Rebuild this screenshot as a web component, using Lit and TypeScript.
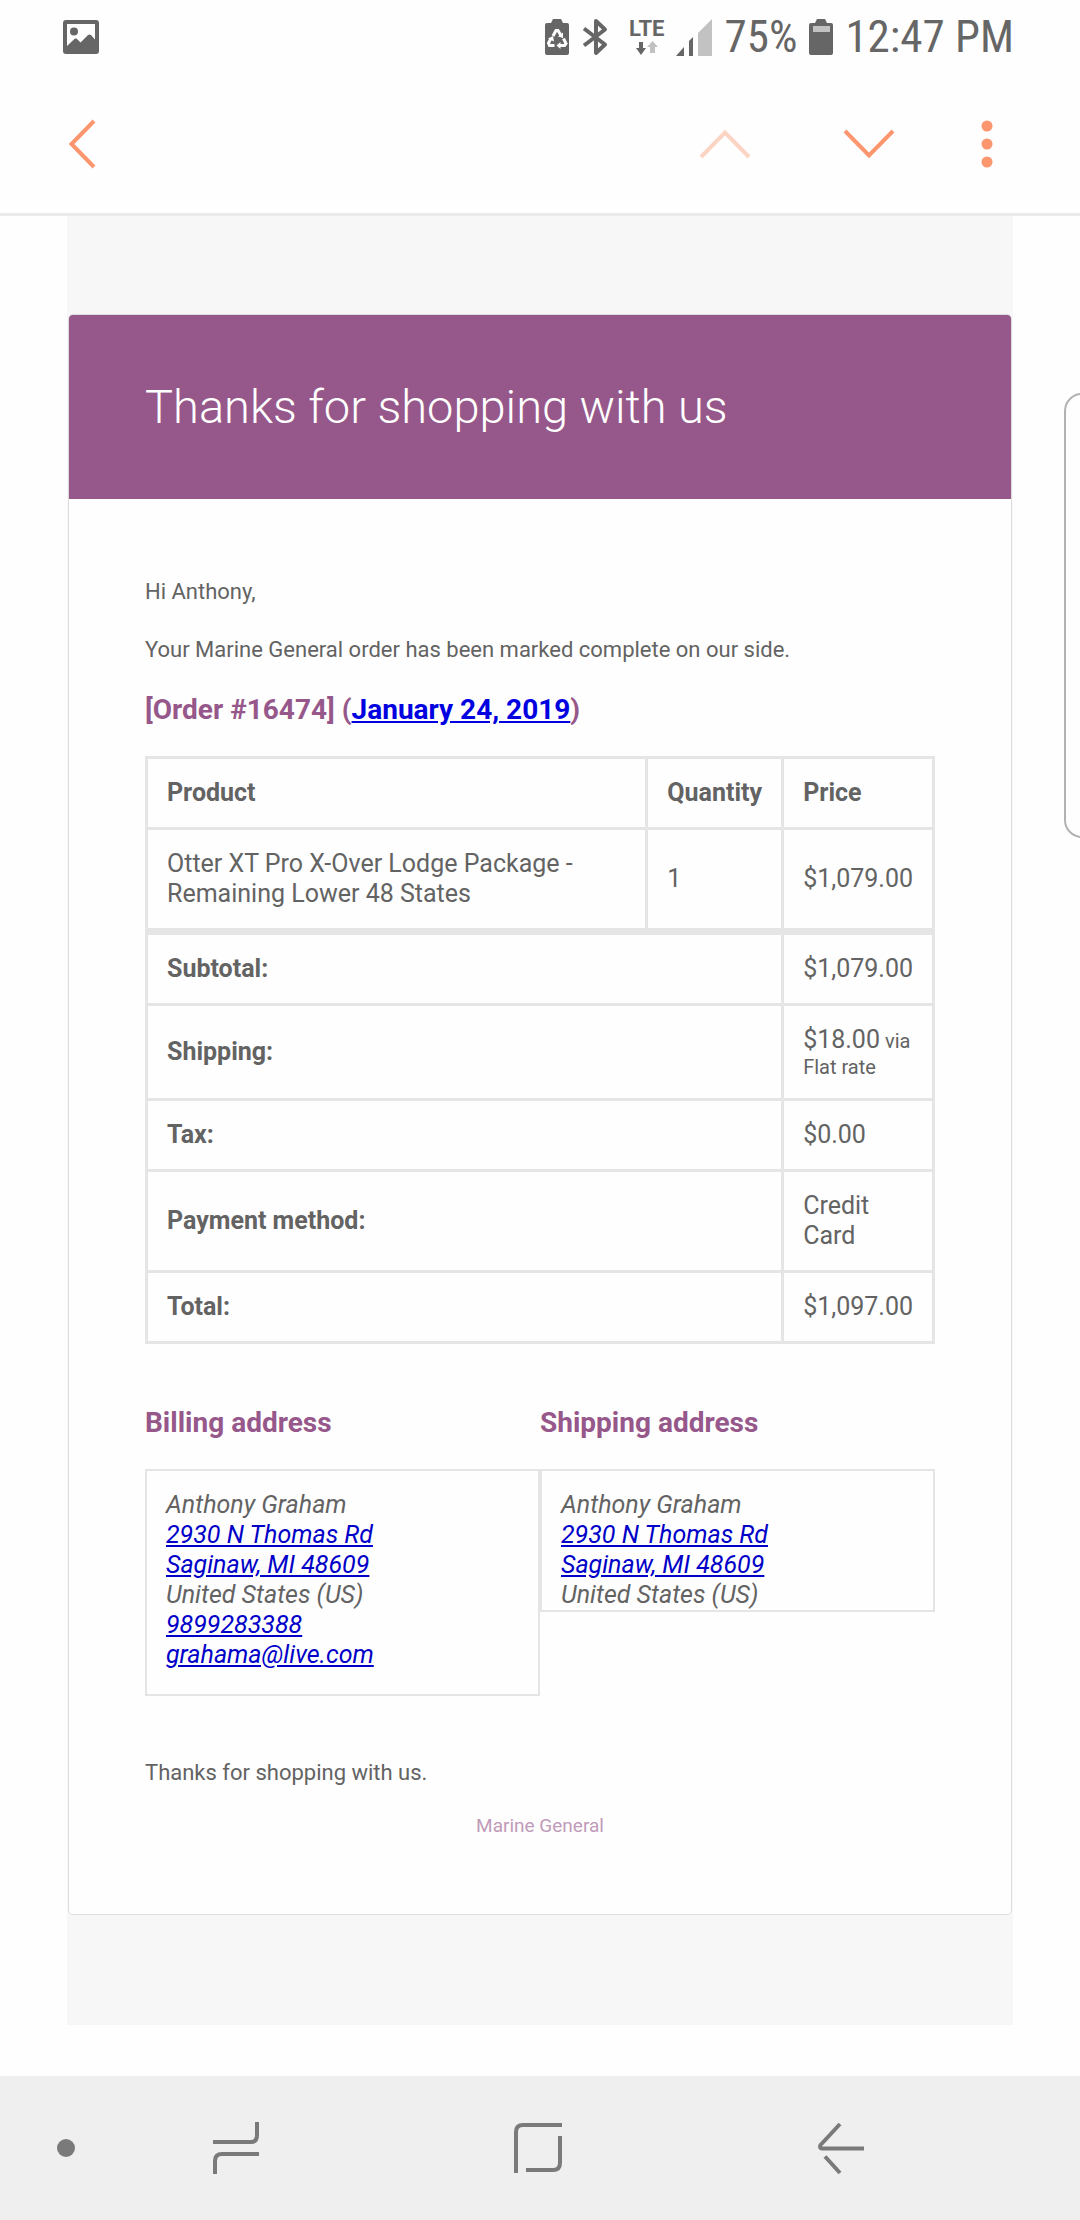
import { LitElement, css, html, svg, nothing } from "lit";
import { customElement, property } from "lit/decorators.js";

interface TotalRow {
  label: string;
  value: string;
  note?: string;
}

interface AddressLine {
  text: string;
  href?: string;
}

const TOTALS: TotalRow[] = [
  { label: "Subtotal:", value: "$1,079.00" },
  { label: "Shipping:", value: "$18.00", note: "via Flat rate" },
  { label: "Tax:", value: "$0.00" },
  { label: "Payment method:", value: "Credit Card" },
  { label: "Total:", value: "$1,097.00" },
];

const SHIPPING: AddressLine[] = [
  { text: "Anthony Graham" },
  { text: "2930 N Thomas Rd", href: "#map" },
  { text: "Saginaw, MI 48609", href: "#map" },
  { text: "United States (US)" },
];

const BILLING: AddressLine[] = [
  ...SHIPPING,
  { text: "9899283388", href: "tel:9899283388" },
  { text: "grahama@live.com", href: "mailto:grahama@live.com" },
];

@customElement("status-bar")
export class StatusBar extends LitElement {
  static styles = css`
    :host {
      display: flex;
      align-items: center;
      box-sizing: border-box;
      height: 74px;
      padding: 0 66px 0 63px;
      color: #666;
      font-family: "Roboto Condensed", Roboto, sans-serif;
    }
    svg {
      display: block;
      flex: none;
    }
    .right {
      display: flex;
      align-items: center;
      gap: 12px;
      margin-left: auto;
    }
    .text {
      font-size: 45px;
      line-height: 52px;
      white-space: nowrap;
    }
    .network {
      display: flex;
      flex-direction: column;
      align-items: center;
      gap: 2px;
      margin-left: 8px;
      font-family: Roboto, sans-serif;
      font-weight: 700;
      font-size: 22px;
      line-height: 20px;
    }
  `;

  render() {
    return html`
      <svg width="36" height="34" viewBox="0 0 36 34" aria-hidden="true">
        <path fill="#666" fill-rule="evenodd"
          d="M3 0H33Q36 0 36 3V31Q36 34 33 34H3Q0 34 0 31V3Q0 0 3 0ZM4 4V26L12 18.5 13.5 18.5 17.5 22.5 25 15Q26.500 14 28 15L32 19.500V4Z" />
        <circle cx="11" cy="11.500" r="4" fill="#666" />
      </svg>
      <div class="right">
        <svg width="24" height="36" viewBox="0 0 24 36" aria-hidden="true">
          <path fill="#666" d="M6 4L8 0H16L18 4H22Q24 4 24 6V34Q24 36 22 36H2Q0 36 0 34V6Q0 4 2 4Z" />
          <g fill="none" stroke="#fff" stroke-width="3">
            <path d="M8 17L11 11.500H13L16 16.500" />
            <path d="M18.500 19.500L21 24.500 19.500 26.500H14.500" />
            <path d="M9.500 26.500H4.500L3.500 24 6 19.500" />
          </g>
          <g fill="#fff">
            <path d="M18 13.500V19L13 17.500Z" />
            <path d="M15.500 23V30L11.500 26.500Z" />
            <path d="M3 19.500L8 17 9 22.500Z" />
          </g>
        </svg>
        <svg width="28" height="38" viewBox="0 0 28 38" aria-hidden="true">
          <path fill="none" stroke="#666" stroke-width="4" stroke-linejoin="round"
            d="M3 10.500L24 26.500 15 35V3L24 11.500 3 27.500" />
        </svg>
        <div class="network">
          <span>LTE</span>
          <svg width="22" height="14" viewBox="0 0 22 14" aria-hidden="true">
            <path fill="#666" d="M3 1H7V7H10L5 14 0 7H3Z" />
            <path fill="#c2c2c2" d="M14 12V6H11L16.500 0 22 6H19V12Z" />
          </svg>
        </div>
        <svg width="36" height="37" viewBox="0 0 36 37" aria-hidden="true">
          <path fill="#666" d="M0 37L8 28V37ZM13 37V22L17 18V37Z" />
          <path fill="#c2c2c2" d="M22 37V14L36 0V37Z" />
        </svg>
        <span class="text">75%</span>
        <svg width="24" height="36" viewBox="0 0 24 36" aria-hidden="true">
          <path fill="#666" d="M6 4L8 0H16L18 4H22Q24 4 24 6V34Q24 36 22 36H2Q0 36 0 34V6Q0 4 2 4Z" />
          <rect x="4" y="7" width="17" height="6" fill="#c2c2c2" />
        </svg>
        <span class="text">12:47 PM</span>
      </div>
    `;
  }
}

@customElement("mail-toolbar")
export class MailToolbar extends LitElement {
  static styles = css`
    :host {
      display: flex;
      align-items: center;
      box-sizing: border-box;
      height: 142px;
      padding: 0 67px 0 56px;
      border-bottom: 3px solid #ebebeb;
      color: #fb966e;
    }
    button {
      display: flex;
      align-items: center;
      justify-content: center;
      width: 72px;
      height: 72px;
      padding: 0;
      border: 0;
      background: none;
      color: inherit;
    }
    .back {
      width: 52px;
    }
    .more {
      width: 52px;
      margin-left: 56px;
    }
    .prev {
      margin-left: auto;
      opacity: 0.4;
    }
    .next {
      margin-left: 72px;
    }
    svg {
      display: block;
      fill: none;
      stroke: currentColor;
      stroke-width: 4;
    }
    .dots {
      fill: currentColor;
      stroke: none;
    }
  `;

  render() {
    return html`
      <button class="back" aria-label="Back">
        <svg width="28" height="50" viewBox="0 0 28 50"><path d="M26 2L3.500 25 26 48" /></svg>
      </button>
      <button class="prev" aria-label="Previous message" disabled>
        <svg width="52" height="30" viewBox="0 0 52 30"><path d="M2 28L26 3.500 50 28" /></svg>
      </button>
      <button class="next" aria-label="Next message">
        <svg width="52" height="30" viewBox="0 0 52 30"><path d="M2 2L26 26.500 50 2" /></svg>
      </button>
      <button class="more" aria-label="More options">
        <svg class="dots" width="12" height="50" viewBox="0 0 12 50">
          <circle cx="6" cy="7" r="5.500" /><circle cx="6" cy="25" r="5.500" /><circle cx="6" cy="43" r="5.500" />
        </svg>
      </button>
    `;
  }
}

@customElement("order-table")
export class OrderTable extends LitElement {
  static styles = css`
    :host {
      display: block;
    }
    table {
      width: 100%;
      border-collapse: collapse;
      font-size: 25px;
      line-height: 30px;
    }
    th,
    td {
      padding: 19px;
      border: 3px solid #e5e5e5;
      text-align: left;
      vertical-align: middle;
    }
    .narrow {
      width: 1%;
    }
    .first th,
    .first td {
      border-top-width: 7px;
    }
    .noted {
      font-size: 20px;
      line-height: 24px;
    }
    .amount {
      font-size: 25px;
      line-height: 30px;
    }
    .note {
      font-size: 20px;
    }
  `;

  render() {
    return html`
      <table>
        <thead>
          <tr>
            <th scope="col">Product</th>
            <th scope="col" class="narrow">Quantity</th>
            <th scope="col" class="narrow">Price</th>
          </tr>
        </thead>
        <tbody>
          <tr>
            <td>Otter XT Pro X-Over Lodge Package - Remaining Lower 48 States</td>
            <td>1</td>
            <td>$1,079.00</td>
          </tr>
        </tbody>
        <tfoot>
          ${TOTALS.map(
            (row, i) => html`
              <tr class=${i === 0 ? "first" : "rest"}>
                <th scope="row" colspan="2">${row.label}</th>
                <td class=${row.note ? "noted" : "plain"}>
                  <span class="amount">${row.value}</span>
                  ${row.note ? html`<small class="note">${row.note}</small>` : nothing}
                </td>
              </tr>
            `,
          )}
        </tfoot>
      </table>
    `;
  }
}

@customElement("address-card")
export class AddressCard extends LitElement {
  @property() heading = "";
  @property({ attribute: false }) lines: AddressLine[] = [];
  @property({ type: Boolean }) contact = false;

  static styles = css`
    :host {
      display: block;
      flex: 1;
    }
    h2 {
      margin: 0 0 28px;
      color: #96588a;
      font-size: 28px;
      line-height: 37px;
      font-weight: 700;
    }
    address {
      padding: 19px 19px 0;
      border: 2px solid #e5e5e5;
      font-size: 25px;
      line-height: 30px;
      font-style: italic;
    }
    .contact {
      padding-bottom: 24px;
    }
    .line {
      display: block;
    }
    a {
      color: #0000c8;
    }
  `;

  render() {
    return html`
      <h2>${this.heading}</h2>
      <address class=${this.contact ? "contact" : "plain"}>
        ${this.lines.map(
          (l) => html`<span class="line">${l.href ? html`<a href=${l.href}>${l.text}</a>` : l.text}</span>`,
        )}
      </address>
    `;
  }
}

@customElement("system-nav")
export class SystemNav extends LitElement {
  static styles = css`
    :host {
      display: grid;
      grid-template-columns: 132fr 208fr 396fr 210fr 134fr;
      height: 144px;
      background: #efefef;
      color: #7a7a7a;
    }
    button {
      display: flex;
      align-items: center;
      justify-content: center;
      padding: 0;
      border: 0;
      background: none;
      color: inherit;
    }
    svg {
      display: block;
      fill: none;
      stroke: currentColor;
      stroke-width: 4;
    }
  `;

  private icon(label: string, shape: unknown) {
    return html`<button aria-label=${label}>
      <svg width="54" height="54" viewBox="0 0 54 54">${shape}</svg>
    </button>`;
  }

  render() {
    return html`
      ${this.icon("Pin navigation bar", svg`<circle cx="27" cy="27" r="9" fill="currentColor" stroke="none" />`)}
      ${this.icon("Recent apps", svg`<path d="M4 21H42Q48 21 48 14V1M50 33H13Q6 33 6 40V53" />`)}
      ${this.icon("Home", svg`<path d="M5 52V11Q5 4 12 4H51M49 15V42Q49 49 42 49H15" />`)}
      ${this.icon("Back", svg`<path d="M26 3L6.500 24Q5 27 8 27.500H50M11 35.500L26 52" stroke-linejoin="round" />`)}
    `;
  }
}

@customElement("app-root")
export class AppRoot extends LitElement {
  static styles = css`
    :host {
      display: flex;
      flex-direction: column;
      position: relative;
      min-height: 100vh;
      background: #fefefe;
      color: #636363;
      font-family: Roboto, sans-serif;
      overflow: hidden;
    }
    .page {
      flex: 1;
      padding-bottom: 48px;
    }
    .mail {
      margin: 0 67px;
      padding: 98px 0 110px;
      background: #f7f7f7;
    }
    .card {
      margin: 0 1px;
      border: 1px solid #dedede;
      border-radius: 5px;
      background: #fefefe;
      overflow: hidden;
    }
    .banner {
      padding: 57px 76px;
      background: #96588a;
      color: #fff;
    }
    h1 {
      margin: 0;
      font-size: 47px;
      line-height: 70px;
      font-weight: 300;
    }
    .content {
      padding: 76px;
    }
    p {
      margin: 0 0 25px;
      font-size: 22px;
      line-height: 33px;
    }
    .order {
      margin: 0 0 28px;
      color: #96588a;
      font-size: 28px;
      line-height: 37px;
      font-weight: 700;
    }
    .order a {
      color: #0000e0;
    }
    .addresses {
      display: flex;
      align-items: flex-start;
      margin: 60px 0;
    }
    .credit {
      margin: 0;
      color: #c09bb9;
      font-size: 19px;
      line-height: 24px;
      text-align: center;
    }
    .edge-handle {
      position: absolute;
      top: 393px;
      right: -20px;
      width: 36px;
      height: 445px;
      box-sizing: border-box;
      border: 2px solid #b2b2b2;
      border-radius: 20px;
      background: #fefefe;
    }
  `;

  render() {
    return html`
      <status-bar></status-bar>
      <mail-toolbar></mail-toolbar>
      <main class="page">
        <div class="mail">
          <article class="card">
            <header class="banner"><h1>Thanks for shopping with us</h1></header>
            <div class="content">
              <p>Hi Anthony,</p>
              <p>Your Marine General order has been marked complete on our side.</p>
              <h2 class="order">[Order #16474] (<a href="#date">January 24, 2019</a>)</h2>
              <order-table></order-table>
              <div class="addresses">
                <address-card heading="Billing address" .lines=${BILLING} contact></address-card>
                <address-card heading="Shipping address" .lines=${SHIPPING}></address-card>
              </div>
              <p>Thanks for shopping with us.</p>
              <p class="credit">Marine General</p>
            </div>
          </article>
        </div>
      </main>
      <system-nav></system-nav>
      <div class="edge-handle"></div>
    `;
  }
}
